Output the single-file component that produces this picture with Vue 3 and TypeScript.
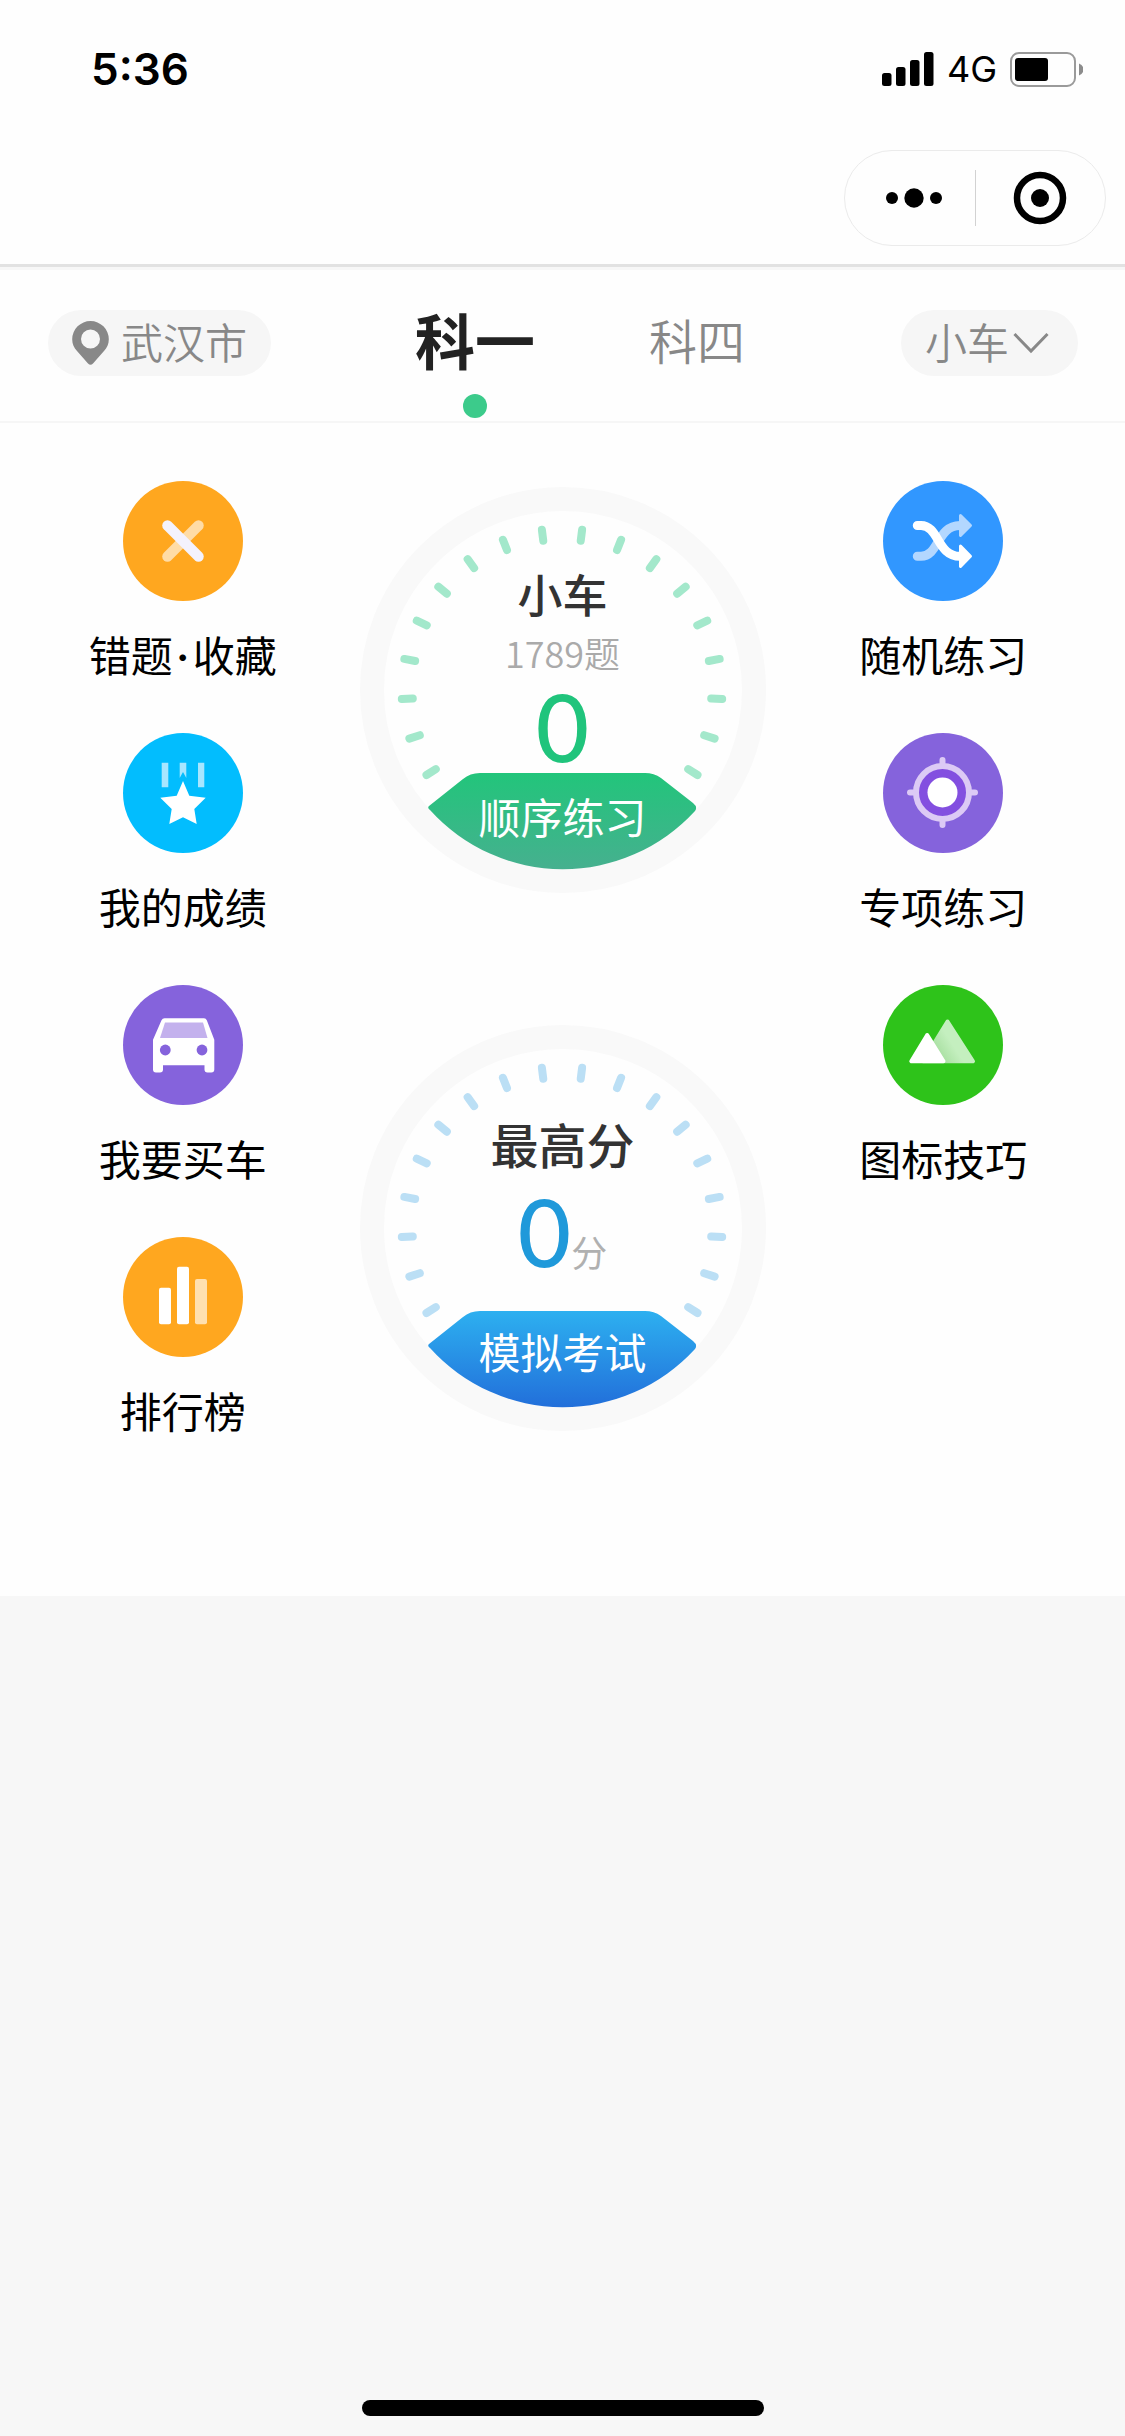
<script setup lang="ts">
import { ref } from 'vue'

type IconName = 'cross' | 'medal' | 'car' | 'bars' | 'shuffle' | 'target' | 'hills'

interface Entry {
  label: string[]
  icon: IconName
  color: string
}

const subjects: string[] = ['科一', '科四']
const activeSubject = ref<string>('科一')
const vehicle = ref<string>('小车')

// A label with two parts is joined by a middle dot
const columns: { side: string; entries: Entry[] }[] = [
  {
    side: 'left',
    entries: [
      { label: ['错题', '收藏'], icon: 'cross', color: '#ffa71f' },
      { label: ['我的成绩'], icon: 'medal', color: '#02bdfe' },
      { label: ['我要买车'], icon: 'car', color: '#8563dc' },
      { label: ['排行榜'], icon: 'bars', color: '#ffa71f' },
    ],
  },
  {
    side: 'right',
    entries: [
      { label: ['随机练习'], icon: 'shuffle', color: '#3197ff' },
      { label: ['专项练习'], icon: 'target', color: '#8563dc' },
      { label: ['图标技巧'], icon: 'hills', color: '#2ec31a' },
    ],
  },
]

const dials = [
  { id: 'practice', title: '小车', total: '1789题', value: '0', unit: '', action: '顺序练习', tick: '#a3e8cb', from: '#22c57b', to: '#46b08f' },
  { id: 'exam', title: '最高分', total: '', value: '0', unit: '分', action: '模拟考试', tick: '#bbdff5', from: '#2db0f0', to: '#226fda' },
]

// 25 marks would fill the circle; the lowest ones are left out for the action plate
const tickAngles: number[] = Array.from({ length: 18 }, (_, i) => -122.4 + i * 14.4)
</script>

<template>
  <div class="app">
    <header class="top">
      <div class="status">
        <span class="time">5:36</span>
        <div class="signals">
          <svg class="bars" viewBox="0 0 52 34" aria-hidden="true">
            <rect x="0" y="21" width="9.5" height="13" rx="2.5" />
            <rect x="14" y="15" width="9.5" height="19" rx="2.5" />
            <rect x="28" y="8" width="9.5" height="26" rx="2.5" />
            <rect x="42" y="0" width="9.5" height="34" rx="2.5" />
          </svg>
          <span class="network">4G</span>
          <svg class="battery" viewBox="0 0 73 35" aria-hidden="true">
            <rect x="1" y="1" width="64" height="33" rx="8" fill="none" stroke="#9a9a9a" stroke-width="2" />
            <rect x="5" y="6" width="33" height="23" rx="3" />
            <path d="M69 11.500q4.500 2 4.500 6t-4.500 6z" fill="#8c8c8c" />
          </svg>
        </div>
      </div>
      <div class="titlebar">
        <div class="capsule">
          <button class="cap-btn more" type="button" aria-label="更多">
            <svg class="dots" viewBox="0 0 58 54" aria-hidden="true">
              <circle cx="7" cy="27" r="6" />
              <circle cx="29" cy="27" r="9.700" />
              <circle cx="51" cy="27" r="6" />
            </svg>
          </button>
          <button class="cap-btn close" type="button" aria-label="关闭">
            <svg class="ring" viewBox="0 0 54 54" aria-hidden="true">
              <circle cx="27" cy="27" r="23" fill="none" stroke="#000" stroke-width="6.500" />
              <circle cx="27" cy="27" r="9" />
            </svg>
          </button>
        </div>
      </div>
    </header>

    <nav class="filters">
      <button class="pill city" type="button">
        <svg class="pin" viewBox="0 0 37 44" aria-hidden="true">
          <path
            fill="#888"
            fill-rule="evenodd"
            d="M18.500 0A18.300 18.300 0 0 0 .2 18.200C.2 23 2 26.500 5 30L16 42.500Q18.500 45 21 42.500L32 30C35 26.500 36.800 23 36.800 18.200A18.300 18.300 0 0 0 18.500 0ZM18.500 8.500a9.500 9.500 0 1 1 0 19a9.500 9.500 0 0 1 0-19Z"
          />
        </svg>
        <span>武汉市</span>
      </button>
      <div class="tabs" role="tablist">
        <button
          v-for="subject in subjects"
          :key="subject"
          class="tab"
          :class="{ active: subject === activeSubject }"
          type="button"
          role="tab"
          :aria-selected="subject === activeSubject"
          @click="activeSubject = subject"
        >
          {{ subject }}
        </button>
      </div>
      <div class="pill kind">
        <select v-model="vehicle" class="kind-select" aria-label="车型">
          <option>小车</option>
        </select>
        <svg class="chevron" viewBox="0 0 36 22" aria-hidden="true">
          <path d="M1.500 2L18 19L34.500 2" fill="none" stroke="#888" stroke-width="3" />
        </svg>
      </div>
    </nav>

    <main class="board">
      <div v-for="column in columns" :key="column.side" class="column" :class="column.side">
        <button v-for="entry in column.entries" :key="entry.icon" class="entry" type="button">
          <svg class="icon" viewBox="0 0 120 120" aria-hidden="true">
            <circle cx="60" cy="60" r="60" :fill="entry.color" />
            <g v-if="entry.icon === 'cross'" stroke-width="10.500" stroke-linecap="round">
              <path d="M75.500 44.500L44.500 75.500" stroke="#ffdca6" />
              <path d="M44.500 44.500L75.500 75.500" stroke="#f4f2fd" />
            </g>
            <g v-else-if="entry.icon === 'medal'">
              <path d="M38.700 29.700h6.600v24.600h-6.600zM75 29.700h6.300v24.600H75zM56.700 29.700h6.600V45L60 39L56.700 45z" fill="#a8e6ff" />
              <path d="M60 48L66.300 62.700L82.700 64.700L71.300 76L73.700 91L60 84.300L46.300 91L48.700 76L37.300 64.700L53.700 62.700Z" fill="#fff" />
            </g>
            <g v-else-if="entry.icon === 'car'">
              <path
                d="M41.500 33.300H81Q83 33.300 83.800 35.300L91.300 54.700V84.500Q91.300 87.500 88.300 87.500H84.500Q81.500 87.500 81.500 84.500V80.300H40V84.500Q40 87.500 37 87.500H33Q30 87.500 30 84.500V54.700L38.500 35.300Q39.500 33.300 41.500 33.300Z"
                fill="#fff"
              />
              <path d="M42 37.500H80L84.500 53H37Z" fill="#c3b1ed" />
              <circle cx="42.300" cy="65" r="5.400" fill="#8563dc" />
              <circle cx="79" cy="65" r="5.400" fill="#8563dc" />
            </g>
            <g v-else-if="entry.icon === 'bars'" fill="#fff">
              <rect x="36" y="50.700" width="12" height="36.500" rx="2" />
              <rect x="54" y="29.700" width="12" height="57.500" rx="2" />
              <rect x="72" y="42" width="12" height="45.200" rx="2" fill="#ffe0b0" />
            </g>
            <g v-else-if="entry.icon === 'shuffle'" fill="none" stroke-width="9" stroke-linecap="round" stroke-linejoin="round">
              <path d="M34.300 75.300H38C56 75.300 54 44.500 77 44.500" stroke="#b3d7ff" />
              <path d="M77.500 34.500L87.500 44.500L77.500 54.500Z" stroke="#b3d7ff" stroke-width="3" fill="#b3d7ff" />
              <path d="M34.300 44.500H38C56 44.500 54 75.300 77 75.300" stroke="#fff" />
              <path d="M77.500 65L87.500 75.300L77.500 85.500Z" stroke="#fff" stroke-width="3" fill="#fff" />
            </g>
            <g v-else-if="entry.icon === 'target'">
              <circle cx="59.500" cy="59.500" r="26.500" fill="#834fe0" stroke="#dccaf5" stroke-width="6" />
              <path d="M59.500 30V27M59.500 89V92M30 59.500H27M89 59.500H92" stroke="#dccaf5" stroke-width="6" stroke-linecap="round" />
              <circle cx="59.500" cy="59.500" r="15" fill="#fff" />
            </g>
            <g v-else stroke-width="4" stroke-linejoin="round">
              <defs>
                <linearGradient id="slope" gradientUnits="userSpaceOnUse" x1="54" y1="66" x2="68" y2="57">
                  <stop offset="0" stop-color="#a9e0a2" />
                  <stop offset="1" stop-color="#c4efbf" />
                </linearGradient>
              </defs>
              <path d="M64.500 36.500L90 76.300H40Z" fill="url(#slope)" stroke="url(#slope)" />
              <path d="M44.200 50L28.300 76.300H60.500Z" fill="#fff" stroke="#fff" />
            </g>
          </svg>
          <span class="entry-label">
            <template v-for="(part, i) in entry.label" :key="part"><span v-if="i > 0" class="middot">·</span><span>{{ part }}</span></template>
          </span>
        </button>
      </div>

      <div class="dials">
        <button v-for="dial in dials" :key="dial.id" class="dial" :class="dial.id" type="button">
          <svg class="face" viewBox="0 0 406 406" aria-hidden="true">
            <defs>
              <linearGradient :id="`plate-${dial.id}`" x1="0" y1="0" x2="0" y2="1">
                <stop offset="0" :stop-color="dial.from" />
                <stop offset="1" :stop-color="dial.to" />
              </linearGradient>
            </defs>
            <circle cx="203" cy="203" r="191" fill="none" stroke="#f9f9f9" stroke-width="24" />
            <path
              v-for="angle in tickAngles"
              :key="angle"
              d="M202 41.500V52.500"
              :stroke="dial.tick"
              stroke-width="8"
              stroke-linecap="round"
              :transform="`rotate(${angle} 202 202)`"
            />
            <path
              d="M69 319L103 292Q110 286 120 286H285Q294 286 301 291L333 316Q338 320 335 324A179 179 0 0 1 70 323Q67 321 69 319Z"
              :fill="`url(#plate-${dial.id})`"
            />
          </svg>
          <span class="dial-title">{{ dial.title }}</span>
          <span v-if="dial.total" class="dial-total">{{ dial.total }}</span>
          <span class="dial-score">
            <span class="dial-value">{{ dial.value }}</span>
            <span v-if="dial.unit" class="dial-unit">{{ dial.unit }}</span>
          </span>
          <span class="dial-action">{{ dial.action }}</span>
        </button>
      </div>
    </main>

    <footer class="home">
      <div class="home-bar"></div>
    </footer>
  </div>
</template>

<style>
body {
  margin: 0;
  background: #f7f7f7;
}
</style>

<style scoped>
.app {
  display: flex;
  flex-direction: column;
  min-height: 100vh;
  background: #f7f7f7;
  color: #000;
  font-family: 'Noto Sans CJK SC', sans-serif;
}

button,
select {
  margin: 0;
  padding: 0;
  border: 0;
  background: none;
  color: inherit;
  font: inherit;
  cursor: pointer;
}

svg {
  display: block;
  flex: none;
}

.top {
  background: #fefefe;
  border-bottom: 3px solid #e2e2e2;
}

.status {
  display: flex;
  justify-content: space-between;
  align-items: center;
  height: 138px;
  padding: 0 42px 0 91px;
  font-family: Inter, sans-serif;
}

.time {
  font-size: 44px;
  font-weight: 600;
}

.signals {
  display: flex;
  align-items: center;
}

.bars {
  width: 52px;
  height: 34px;
}

.network {
  margin: 0 13px;
  font-size: 36px;
  font-weight: 400;
}

.battery {
  width: 73px;
  height: 35px;
}

.titlebar {
  display: flex;
  justify-content: flex-end;
  height: 114px;
  padding: 12px 19px 0;
}

.capsule {
  display: flex;
  box-sizing: border-box;
  width: 262px;
  height: 96px;
  border: 1px solid #ebebeb;
  border-radius: 48px;
}

.cap-btn {
  display: flex;
  box-sizing: border-box;
  width: 50%;
  align-items: center;
  justify-content: center;
}

.more {
  padding-left: 8px;
}

.close {
  position: relative;
}

.close::before {
  content: '';
  position: absolute;
  left: 0;
  top: 19px;
  bottom: 19px;
  width: 1px;
  background: #d2d2d2;
}

.dots {
  width: 58px;
  height: 54px;
}

.ring {
  width: 54px;
  height: 54px;
}

.filters {
  display: flex;
  align-items: flex-start;
  height: 111px;
  padding: 40px 47px 0 48px;
  border-top: 3px solid #f7f7f7;
  border-bottom: 2px solid #f6f6f6;
  background: #fefefe;
}

.pill {
  display: flex;
  align-items: center;
  box-sizing: border-box;
  height: 66px;
  border-radius: 33px;
  background: #f6f6f6;
  color: #888;
  font-size: 42px;
  font-weight: 350;
  line-height: 62px;
}

.city {
  gap: 12px;
  padding: 0 24px;
}

.city span {
  padding-bottom: 4px;
}

.pin {
  width: 37px;
  height: 44px;
}

.kind {
  gap: 4px;
  margin-left: auto;
  padding: 0 29px 0 24px;
}

.kind-select {
  width: 84px;
  height: 66px;
  padding-bottom: 4px;
  appearance: none;
  outline: none;
}

.chevron {
  width: 36px;
  height: 22px;
}

.tabs {
  display: flex;
  gap: 114px;
  margin-left: 144px;
}

.tab {
  position: relative;
  box-sizing: border-box;
  height: 66px;
  padding-bottom: 8px;
  color: #888;
  font-size: 48px;
  font-weight: 350;
  line-height: 58px;
}

.tab.active {
  color: #222;
  font-size: 60px;
  font-weight: 700;
}

.tab.active::after {
  content: '';
  position: absolute;
  left: 50%;
  top: 84px;
  width: 24px;
  height: 24px;
  margin-left: -12px;
  border-radius: 50%;
  background: #3ccb8b;
}

.board {
  display: grid;
  grid-template-columns: 1fr 406px 1fr;
  align-items: start;
  padding: 58px 0 156px;
  background: #fefefe;
}

.column {
  display: flex;
  flex-direction: column;
  align-items: center;
  gap: 49px;
}

.left {
  padding-left: 6px;
}

.right {
  grid-column: 3;
  padding-right: 4px;
}

.dials {
  display: flex;
  flex-direction: column;
  grid-column: 2;
  grid-row: 1;
  gap: 132px;
  padding-top: 6px;
}

.entry {
  display: flex;
  flex-direction: column;
  align-items: center;
  gap: 23px;
}

.icon {
  width: 120px;
  height: 120px;
}

.entry-label {
  display: flex;
  align-items: baseline;
  height: 60px;
  font-size: 42px;
  line-height: 60px;
  white-space: nowrap;
}

.middot {
  width: 20px;
  font-family: Inter, sans-serif;
  font-weight: 600;
  text-align: center;
}

.dial {
  position: relative;
  display: flex;
  flex-direction: column;
  align-items: center;
  box-sizing: border-box;
  width: 406px;
  height: 406px;
  padding: 77px 0 47px;
}

.exam {
  padding: 88px 0 50px;
}

.face {
  position: absolute;
  inset: 0;
  width: 100%;
  height: 100%;
}

.dial-title,
.dial-total,
.dial-score,
.dial-action {
  position: relative;
}

.dial-title {
  color: #333;
  font-size: 45px;
  font-weight: 500;
  line-height: 60px;
}

.exam .dial-title {
  font-size: 48px;
}

.dial-total {
  color: #aaa;
  font-size: 36px;
  font-weight: 350;
  line-height: 56px;
}

.dial-score {
  display: flex;
  align-items: baseline;
  line-height: 94px;
}

.dial-value {
  color: #20c47c;
  font-family: Lato, sans-serif;
  font-size: 92px;
  font-weight: 500;
}

.exam .dial-score {
  padding-top: 12px;
}

.exam .dial-value {
  color: #1f99da;
}

.dial-unit {
  color: #b0b0b0;
  font-size: 36px;
}

.dial-action {
  margin-top: auto;
  color: #fff;
  font-size: 42px;
  line-height: 60px;
}

.home {
  display: flex;
  justify-content: center;
  margin-top: auto;
  padding-bottom: 20px;
}

.home-bar {
  width: 402px;
  height: 16px;
  border-radius: 8px;
  background: #000;
}
</style>
